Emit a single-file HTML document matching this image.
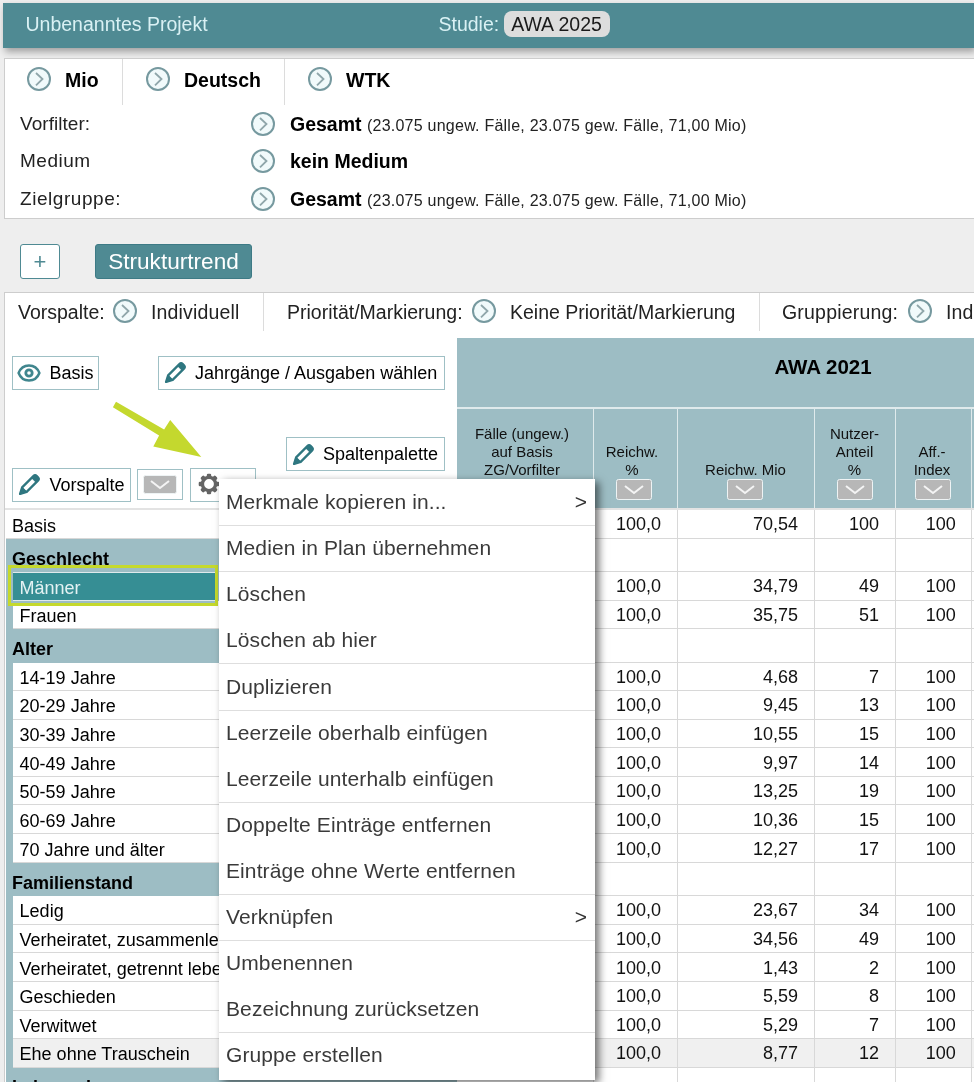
<!DOCTYPE html>
<html lang="de">
<head>
<meta charset="utf-8">
<title>Strukturtrend</title>
<style>
*{box-sizing:border-box;margin:0;padding:0}
html,body{width:974px;height:1082px;overflow:hidden;background:#eeeeee;font-family:"Liberation Sans",sans-serif;color:#111}
#wrap{position:absolute;left:0;top:0;width:974px;height:1082px;overflow:hidden;will-change:transform}
.abs{position:absolute}
#topbar{left:3px;top:2.500px;width:971px;height:45px;background:#4f8a93;box-shadow:2px 4px 7px rgba(0,0,0,.32)}
#topbar .t{position:absolute;top:10.700px;font-size:19.500px;color:#d9f1f4;white-space:nowrap}
#study{height:26px;width:106px;border-radius:8px;background:#dddddd;color:#1a1a1a;font-size:19.500px;line-height:27.500px;text-align:center}
.panel{background:#fff;border:1px solid #cdcdcd}
.ci{position:absolute;width:24px;height:24px}
.lbl{position:absolute;font-size:19px;color:#222;white-space:nowrap}
.bold{position:absolute;font-size:19.5px;font-weight:bold;color:#000;white-space:nowrap}
.bold small{font-weight:normal;font-size:16px;letter-spacing:0.24px;color:#222}
.vsep{position:absolute;width:1px;background:#dcdcdc}
.btn{position:absolute;background:#fff;border:1px solid #9fc0c5;font-size:18px;color:#000;white-space:nowrap;height:34px;line-height:32px}
#hdr{left:457px;top:338.300px;width:517px;height:169.500px;background:#9dbdc4}
.hl{position:absolute;background:#dfeaec}
.ch{position:absolute;font-size:15px;line-height:18px;text-align:center;color:#111;white-space:nowrap}
.row{position:absolute;left:457px;width:517px;border-bottom:1px solid #d8d8d8;background:#fff}
.cell{position:absolute;top:0;height:100%;border-right:1px solid #d8d8d8;font-size:18px;text-align:right;color:#111;padding-right:16px}
.lrow{position:absolute;font-size:18px;color:#000;white-space:nowrap;overflow:hidden}
.grp{left:6px;width:451px;background:#9dbdc4;font-weight:bold;padding-left:6px}
.itm{left:12.600px;width:444.400px;background:#fff;border-bottom:1px solid #d8d8d8;padding-left:7px}
#menu{z-index:5;left:219px;top:479px;width:376px;height:600.500px;background:#fff;box-shadow:4px 3px 8px rgba(0,0,0,.55)}
.mi{position:absolute;left:0;width:376px;height:46px;font-size:21px;letter-spacing:0.1px;color:#3a3a3a;padding-left:7px;line-height:45px;white-space:nowrap}
.ms{position:absolute;left:0;width:376px;height:1px;background:#dedede}
.ar{position:absolute;right:8px;top:0;font-size:21px;color:#333}
</style>
</head>
<body>
<div id="wrap">
<div id="topbar" class="abs">
  <span class="t" style="left:22.500px">Unbenanntes Projekt</span>
  <span class="t" style="left:435.500px">Studie:</span>
  <div id="study" class="abs" style="left:500.500px;top:8.800px">AWA 2025</div>
</div>
<div id="p1" class="abs panel" style="left:3.500px;top:58px;width:976px;height:161px">
  <div class="vsep" style="left:117.500px;top:0;height:46px"></div>
  <div class="vsep" style="left:279.500px;top:0;height:46px"></div>
</div>
<svg class="ci" style="left:27px;top:67px" viewBox="0 0 24 24"><circle cx="12" cy="12" r="11" fill="#f1fafb" stroke="#76999f" stroke-width="2"/><path d="M9 6 L15.5 12 L9 18.3" fill="none" stroke="#8fa6aa" stroke-width="1.800"/></svg><span class="bold" style="left:65px;top:69px">Mio</span>
<svg class="ci" style="left:146px;top:67px" viewBox="0 0 24 24"><circle cx="12" cy="12" r="11" fill="#f1fafb" stroke="#76999f" stroke-width="2"/><path d="M9 6 L15.5 12 L9 18.3" fill="none" stroke="#8fa6aa" stroke-width="1.800"/></svg><span class="bold" style="left:184px;top:69px">Deutsch</span>
<svg class="ci" style="left:308px;top:67px" viewBox="0 0 24 24"><circle cx="12" cy="12" r="11" fill="#f1fafb" stroke="#76999f" stroke-width="2"/><path d="M9 6 L15.5 12 L9 18.3" fill="none" stroke="#8fa6aa" stroke-width="1.800"/></svg><span class="bold" style="left:346px;top:69px">WTK</span>
<span class="lbl" style="left:20px;top:113px;letter-spacing:0.05px">Vorfilter:</span>
<svg class="ci" style="left:251px;top:112px" viewBox="0 0 24 24"><circle cx="12" cy="12" r="11" fill="#f1fafb" stroke="#76999f" stroke-width="2"/><path d="M9 6 L15.5 12 L9 18.3" fill="none" stroke="#8fa6aa" stroke-width="1.800"/></svg><span class="bold" style="left:290px;top:113px">Gesamt <small>(23.075 ungew. Fälle, 23.075 gew. Fälle, 71,00 Mio)</small></span>
<span class="lbl" style="left:20px;top:150px;letter-spacing:0.5px">Medium</span>
<svg class="ci" style="left:251px;top:149px" viewBox="0 0 24 24"><circle cx="12" cy="12" r="11" fill="#f1fafb" stroke="#76999f" stroke-width="2"/><path d="M9 6 L15.5 12 L9 18.3" fill="none" stroke="#8fa6aa" stroke-width="1.800"/></svg><span class="bold" style="left:290px;top:150px">kein Medium</span>
<span class="lbl" style="left:20px;top:188px;letter-spacing:0.55px">Zielgruppe:</span>
<svg class="ci" style="left:251px;top:187px" viewBox="0 0 24 24"><circle cx="12" cy="12" r="11" fill="#f1fafb" stroke="#76999f" stroke-width="2"/><path d="M9 6 L15.5 12 L9 18.3" fill="none" stroke="#8fa6aa" stroke-width="1.800"/></svg><span class="bold" style="left:290px;top:188px">Gesamt <small>(23.075 ungew. Fälle, 23.075 gew. Fälle, 71,00 Mio)</small></span>
<div class="abs" style="left:20px;top:244px;width:40px;height:35px;background:#fff;border:1.5px solid #4f8a93;border-radius:3px;color:#4f8a93;font-size:22px;text-align:center;line-height:33px">+</div>
<div class="abs" style="left:95px;top:244px;width:157px;height:35px;border:1.5px solid #3d7a85;border-radius:3px;background:#4f8a93;color:#fff;font-size:22.600px;text-align:center;line-height:33px">Strukturtrend</div>
<div id="p2" class="abs panel" style="left:3.500px;top:291.700px;width:976px;height:800px">
  <div class="vsep" style="left:258.500px;top:0;height:38px"></div>
  <div class="vsep" style="left:754.500px;top:0;height:38px"></div>
</div>
<span class="lbl" style="left:18px;top:300.800px;font-size:19.5px">Vorspalte:</span><svg class="ci" style="left:113px;top:299px" viewBox="0 0 24 24"><circle cx="12" cy="12" r="11" fill="#f1fafb" stroke="#76999f" stroke-width="2"/><path d="M9 6 L15.5 12 L9 18.3" fill="none" stroke="#8fa6aa" stroke-width="1.800"/></svg><span class="lbl" style="left:151px;top:300.800px;font-size:19.5px;letter-spacing:0.15px">Individuell</span>
<span class="lbl" style="left:287px;top:300.800px;font-size:19.5px">Priorität/Markierung:</span><svg class="ci" style="left:472px;top:299px" viewBox="0 0 24 24"><circle cx="12" cy="12" r="11" fill="#f1fafb" stroke="#76999f" stroke-width="2"/><path d="M9 6 L15.5 12 L9 18.3" fill="none" stroke="#8fa6aa" stroke-width="1.800"/></svg><span class="lbl" style="left:510px;top:300.800px;font-size:19.5px">Keine Priorität/Markierung</span>
<span class="lbl" style="left:782px;top:300.800px;font-size:19.5px;letter-spacing:0.2px">Gruppierung:</span><svg class="ci" style="left:908px;top:299px" viewBox="0 0 24 24"><circle cx="12" cy="12" r="11" fill="#f1fafb" stroke="#76999f" stroke-width="2"/><path d="M9 6 L15.5 12 L9 18.3" fill="none" stroke="#8fa6aa" stroke-width="1.800"/></svg><span class="lbl" style="left:946px;top:300.800px;font-size:19.5px;letter-spacing:0.15px">Individuell</span>
<div class="btn" style="left:12px;top:356px;width:87px;padding-left:36.500px">Basis</div><svg class="abs" style="left:17.3px;top:364.1px;width:24px;height:18px" viewBox="0 0 24 18"><path d="M1.600 9 C5.500 -1 18.500 -1 22.400 9 C18.500 19 5.500 19 1.600 9 Z" fill="#fff" stroke="#40868e" stroke-width="2.500" stroke-linejoin="round"/><circle cx="12" cy="9" r="3.200" fill="none" stroke="#40868e" stroke-width="2.800"/></svg>
<div class="btn" style="left:158px;top:356px;width:287px;padding-left:36px">Jahrgänge / Ausgaben wählen</div><svg class="abs" style="left:162.3px;top:360px;width:26px;height:26px" viewBox="0 0 26 26"><g transform="rotate(45 13 13)"><path d="M9.800 19.500 V3.600 a2.400 2.400 0 0 1 2.400 -2.400 h1.600 a2.400 2.400 0 0 1 2.400 2.400 V19.500 L13 25.600 Z" fill="#fff" stroke="#2f7780" stroke-width="2.300" stroke-linejoin="round"/><path d="M9.800 6 V3.600 a2.400 2.400 0 0 1 2.400 -2.400 h1.600 a2.400 2.400 0 0 1 2.400 2.400 V6 Z" fill="#2f7780" stroke="#2f7780" stroke-width="1"/><path d="M9.800 19.500 H16.200 L13 25.600 Z" fill="#2f7780" stroke="#2f7780" stroke-width="1"/></g></svg>
<div class="btn" style="left:286px;top:437px;width:159px;padding-left:36px">Spaltenpalette</div><svg class="abs" style="left:290.3px;top:441.5px;width:26px;height:26px" viewBox="0 0 26 26"><g transform="rotate(45 13 13)"><path d="M9.800 19.500 V3.600 a2.400 2.400 0 0 1 2.400 -2.400 h1.600 a2.400 2.400 0 0 1 2.400 2.400 V19.500 L13 25.600 Z" fill="#fff" stroke="#2f7780" stroke-width="2.300" stroke-linejoin="round"/><path d="M9.800 6 V3.600 a2.400 2.400 0 0 1 2.400 -2.400 h1.600 a2.400 2.400 0 0 1 2.400 2.400 V6 Z" fill="#2f7780" stroke="#2f7780" stroke-width="1"/><path d="M9.800 19.500 H16.200 L13 25.600 Z" fill="#2f7780" stroke="#2f7780" stroke-width="1"/></g></svg>
<div class="btn" style="left:12px;top:468px;width:119px;padding-left:36.500px">Vorspalte</div><svg class="abs" style="left:16.3px;top:472px;width:26px;height:26px" viewBox="0 0 26 26"><g transform="rotate(45 13 13)"><path d="M9.800 19.500 V3.600 a2.400 2.400 0 0 1 2.400 -2.400 h1.600 a2.400 2.400 0 0 1 2.400 2.400 V19.500 L13 25.600 Z" fill="#fff" stroke="#2f7780" stroke-width="2.300" stroke-linejoin="round"/><path d="M9.800 6 V3.600 a2.400 2.400 0 0 1 2.400 -2.400 h1.600 a2.400 2.400 0 0 1 2.400 2.400 V6 Z" fill="#2f7780" stroke="#2f7780" stroke-width="1"/><path d="M9.800 19.500 H16.200 L13 25.600 Z" fill="#2f7780" stroke="#2f7780" stroke-width="1"/></g></svg>
<div class="btn" style="left:137px;top:469px;width:46px;height:31px"></div><svg class="abs" style="left:143px;top:475px;width:34px;height:19px" viewBox="0 0 34 19"><rect x="0.5" y="0.5" width="33" height="18" rx="2" fill="#b7b7b7" stroke="#eef3f4" stroke-width="1"/><path d="M8.0 6.0 L17.0 13.0 L26.0 6.0" fill="none" stroke="#f4f4f4" stroke-width="2"/></svg>
<div class="btn" style="left:189.500px;top:468px;width:66px"></div><svg class="abs" style="left:197.200px;top:472.400px;width:24px;height:24px" viewBox="-12 -12 24 24"><g fill="#646464"><rect x="-2.200" y="-10.300" width="4.400" height="5" rx="1.300" transform="rotate(0)"/><rect x="-2.200" y="-10.300" width="4.400" height="5" rx="1.300" transform="rotate(45)"/><rect x="-2.200" y="-10.300" width="4.400" height="5" rx="1.300" transform="rotate(90)"/><rect x="-2.200" y="-10.300" width="4.400" height="5" rx="1.300" transform="rotate(135)"/><rect x="-2.200" y="-10.300" width="4.400" height="5" rx="1.300" transform="rotate(180)"/><rect x="-2.200" y="-10.300" width="4.400" height="5" rx="1.300" transform="rotate(225)"/><rect x="-2.200" y="-10.300" width="4.400" height="5" rx="1.300" transform="rotate(270)"/><rect x="-2.200" y="-10.300" width="4.400" height="5" rx="1.300" transform="rotate(315)"/></g><circle r="6.600" fill="none" stroke="#646464" stroke-width="3.400"/></svg>
<svg class="abs" style="left:100px;top:395px;width:120px;height:75px" viewBox="100 395 120 75"><path d="M116 401.700 L164.100 429.400 L170.200 419.900 L201.300 456.900 L153.300 446.400 L159.100 435.600 L112.900 407.200 Z" fill="#c4d82e"/></svg>
<div id="hdr" class="abs">
<div class="hl" style="left:0;top:69px;width:517px;height:1.5px"></div>
<div class="hl" style="left:135.5px;top:70px;height:101px;width:1.5px"></div>
<div class="hl" style="left:219.5px;top:70px;height:101px;width:1.5px"></div>
<div class="hl" style="left:356.5px;top:70px;height:101px;width:1.5px"></div>
<div class="hl" style="left:437.5px;top:70px;height:101px;width:1.5px"></div>
<div class="hl" style="left:513.5px;top:70px;height:101px;width:1.5px"></div>
<div class="abs" style="left:0;top:16.500px;width:732px;text-align:center;font-weight:bold;font-size:20.500px;color:#000">AWA 2021</div>
<div class="ch" style="left:0;top:86.800px;width:130px">Fälle (ungew.)<br>auf Basis<br>ZG/Vorfilter</div>
<div class="ch" style="left:136px;top:104.800px;width:78px">Reichw.<br>%</div>
<div class="ch" style="left:220px;top:122.800px;width:137px">Reichw. Mio</div>
<div class="ch" style="left:357px;top:86.800px;width:81px">Nutzer-<br>Anteil<br>%</div>
<div class="ch" style="left:437px;top:104.800px;width:76px">Aff.-<br>Index</div>
</div>
<svg class="abs" style="left:616px;top:479px;width:36px;height:21px" viewBox="0 0 36 21"><rect x="0.5" y="0.5" width="35" height="20" rx="2" fill="#b7b7b7" stroke="#eef3f4" stroke-width="1"/><path d="M9.0 7.0 L18.0 14.0 L27.0 7.0" fill="none" stroke="#f4f4f4" stroke-width="2"/></svg>
<svg class="abs" style="left:727px;top:479px;width:36px;height:21px" viewBox="0 0 36 21"><rect x="0.5" y="0.5" width="35" height="20" rx="2" fill="#b7b7b7" stroke="#eef3f4" stroke-width="1"/><path d="M9.0 7.0 L18.0 14.0 L27.0 7.0" fill="none" stroke="#f4f4f4" stroke-width="2"/></svg>
<svg class="abs" style="left:837px;top:479px;width:36px;height:21px" viewBox="0 0 36 21"><rect x="0.5" y="0.5" width="35" height="20" rx="2" fill="#b7b7b7" stroke="#eef3f4" stroke-width="1"/><path d="M9.0 7.0 L18.0 14.0 L27.0 7.0" fill="none" stroke="#f4f4f4" stroke-width="2"/></svg>
<svg class="abs" style="left:915px;top:479px;width:36px;height:21px" viewBox="0 0 36 21"><rect x="0.5" y="0.5" width="35" height="20" rx="2" fill="#b7b7b7" stroke="#eef3f4" stroke-width="1"/><path d="M9.0 7.0 L18.0 14.0 L27.0 7.0" fill="none" stroke="#f4f4f4" stroke-width="2"/></svg>
<div class="abs" style="left:5px;top:507.800px;width:969px;height:2.600px;background:#e3e3e3;z-index:1"></div>
<div class="abs" style="left:6px;top:538px;width:451px;height:560px;background:#9dbdc4"></div>
<div class="row" style="top:509px;height:30px;background:#fff;line-height:31px">
<div class="cell" style="left:0px;width:137px"></div>
<div class="cell" style="left:136px;width:85px">100,0</div>
<div class="cell" style="left:220px;width:138px">70,54</div>
<div class="cell" style="left:357px;width:82px">100</div>
<div class="cell" style="left:438px;width:77px;padding-right:15.300px">100</div>
</div>
<div class="lrow itm" style="left:6px;width:451px;padding-left:6px;top:509px;height:30px;line-height:34px">Basis</div>
<div class="row" style="top:539px;height:33px;background:#fff;line-height:34px">
<div class="cell" style="left:0px;width:137px"></div>
<div class="cell" style="left:136px;width:85px"></div>
<div class="cell" style="left:220px;width:138px"></div>
<div class="cell" style="left:357px;width:82px"></div>
<div class="cell" style="left:438px;width:77px;padding-right:15.300px"></div>
</div>
<div class="lrow grp" style="top:539px;height:33px;line-height:40px">Geschlecht</div>
<div class="row" style="top:572px;height:28.5px;background:#fff;line-height:29.5px">
<div class="cell" style="left:0px;width:137px"></div>
<div class="cell" style="left:136px;width:85px">100,0</div>
<div class="cell" style="left:220px;width:138px">34,79</div>
<div class="cell" style="left:357px;width:82px">49</div>
<div class="cell" style="left:438px;width:77px;padding-right:15.300px">100</div>
</div>
<div class="row" style="top:600.5px;height:28.5px;background:#fff;line-height:29.5px">
<div class="cell" style="left:0px;width:137px"></div>
<div class="cell" style="left:136px;width:85px">100,0</div>
<div class="cell" style="left:220px;width:138px">35,75</div>
<div class="cell" style="left:357px;width:82px">51</div>
<div class="cell" style="left:438px;width:77px;padding-right:15.300px">100</div>
</div>
<div class="lrow itm" style="top:600.5px;height:28.5px;line-height:31.5px;background:#fff">Frauen</div>
<div class="row" style="top:629px;height:33.5px;background:#fff;line-height:34.5px">
<div class="cell" style="left:0px;width:137px"></div>
<div class="cell" style="left:136px;width:85px"></div>
<div class="cell" style="left:220px;width:138px"></div>
<div class="cell" style="left:357px;width:82px"></div>
<div class="cell" style="left:438px;width:77px;padding-right:15.300px"></div>
</div>
<div class="lrow grp" style="top:629px;height:33.5px;line-height:40.5px">Alter</div>
<div class="row" style="top:662.5px;height:28.5px;background:#fff;line-height:29.5px">
<div class="cell" style="left:0px;width:137px"></div>
<div class="cell" style="left:136px;width:85px">100,0</div>
<div class="cell" style="left:220px;width:138px">4,68</div>
<div class="cell" style="left:357px;width:82px">7</div>
<div class="cell" style="left:438px;width:77px;padding-right:15.300px">100</div>
</div>
<div class="lrow itm" style="top:662.5px;height:28.5px;line-height:31.5px;background:#fff">14-19 Jahre</div>
<div class="row" style="top:691px;height:28.5px;background:#fff;line-height:29.5px">
<div class="cell" style="left:0px;width:137px"></div>
<div class="cell" style="left:136px;width:85px">100,0</div>
<div class="cell" style="left:220px;width:138px">9,45</div>
<div class="cell" style="left:357px;width:82px">13</div>
<div class="cell" style="left:438px;width:77px;padding-right:15.300px">100</div>
</div>
<div class="lrow itm" style="top:691px;height:28.5px;line-height:31.5px;background:#fff">20-29 Jahre</div>
<div class="row" style="top:719.5px;height:28.5px;background:#fff;line-height:29.5px">
<div class="cell" style="left:0px;width:137px"></div>
<div class="cell" style="left:136px;width:85px">100,0</div>
<div class="cell" style="left:220px;width:138px">10,55</div>
<div class="cell" style="left:357px;width:82px">15</div>
<div class="cell" style="left:438px;width:77px;padding-right:15.300px">100</div>
</div>
<div class="lrow itm" style="top:719.5px;height:28.5px;line-height:31.5px;background:#fff">30-39 Jahre</div>
<div class="row" style="top:748px;height:29px;background:#fff;line-height:30px">
<div class="cell" style="left:0px;width:137px"></div>
<div class="cell" style="left:136px;width:85px">100,0</div>
<div class="cell" style="left:220px;width:138px">9,97</div>
<div class="cell" style="left:357px;width:82px">14</div>
<div class="cell" style="left:438px;width:77px;padding-right:15.300px">100</div>
</div>
<div class="lrow itm" style="top:748px;height:29px;line-height:32px;background:#fff">40-49 Jahre</div>
<div class="row" style="top:777px;height:28px;background:#fff;line-height:29px">
<div class="cell" style="left:0px;width:137px"></div>
<div class="cell" style="left:136px;width:85px">100,0</div>
<div class="cell" style="left:220px;width:138px">13,25</div>
<div class="cell" style="left:357px;width:82px">19</div>
<div class="cell" style="left:438px;width:77px;padding-right:15.300px">100</div>
</div>
<div class="lrow itm" style="top:777px;height:28px;line-height:31px;background:#fff">50-59 Jahre</div>
<div class="row" style="top:805px;height:29px;background:#fff;line-height:30px">
<div class="cell" style="left:0px;width:137px"></div>
<div class="cell" style="left:136px;width:85px">100,0</div>
<div class="cell" style="left:220px;width:138px">10,36</div>
<div class="cell" style="left:357px;width:82px">15</div>
<div class="cell" style="left:438px;width:77px;padding-right:15.300px">100</div>
</div>
<div class="lrow itm" style="top:805px;height:29px;line-height:32px;background:#fff">60-69 Jahre</div>
<div class="row" style="top:834px;height:29px;background:#fff;line-height:30px">
<div class="cell" style="left:0px;width:137px"></div>
<div class="cell" style="left:136px;width:85px">100,0</div>
<div class="cell" style="left:220px;width:138px">12,27</div>
<div class="cell" style="left:357px;width:82px">17</div>
<div class="cell" style="left:438px;width:77px;padding-right:15.300px">100</div>
</div>
<div class="lrow itm" style="top:834px;height:29px;line-height:32px;background:#fff">70 Jahre und älter</div>
<div class="row" style="top:863px;height:33px;background:#fff;line-height:34px">
<div class="cell" style="left:0px;width:137px"></div>
<div class="cell" style="left:136px;width:85px"></div>
<div class="cell" style="left:220px;width:138px"></div>
<div class="cell" style="left:357px;width:82px"></div>
<div class="cell" style="left:438px;width:77px;padding-right:15.300px"></div>
</div>
<div class="lrow grp" style="top:863px;height:33px;line-height:40px">Familienstand</div>
<div class="row" style="top:896px;height:28.5px;background:#fff;line-height:29.5px">
<div class="cell" style="left:0px;width:137px"></div>
<div class="cell" style="left:136px;width:85px">100,0</div>
<div class="cell" style="left:220px;width:138px">23,67</div>
<div class="cell" style="left:357px;width:82px">34</div>
<div class="cell" style="left:438px;width:77px;padding-right:15.300px">100</div>
</div>
<div class="lrow itm" style="top:896px;height:28.5px;line-height:31.5px;background:#fff">Ledig</div>
<div class="row" style="top:924.5px;height:28.5px;background:#fff;line-height:29.5px">
<div class="cell" style="left:0px;width:137px"></div>
<div class="cell" style="left:136px;width:85px">100,0</div>
<div class="cell" style="left:220px;width:138px">34,56</div>
<div class="cell" style="left:357px;width:82px">49</div>
<div class="cell" style="left:438px;width:77px;padding-right:15.300px">100</div>
</div>
<div class="lrow itm" style="top:924.5px;height:28.5px;line-height:31.5px;background:#fff">Verheiratet, zusammenlebend</div>
<div class="row" style="top:953px;height:29px;background:#fff;line-height:30px">
<div class="cell" style="left:0px;width:137px"></div>
<div class="cell" style="left:136px;width:85px">100,0</div>
<div class="cell" style="left:220px;width:138px">1,43</div>
<div class="cell" style="left:357px;width:82px">2</div>
<div class="cell" style="left:438px;width:77px;padding-right:15.300px">100</div>
</div>
<div class="lrow itm" style="top:953px;height:29px;line-height:32px;background:#fff">Verheiratet, getrennt lebend</div>
<div class="row" style="top:982px;height:28.5px;background:#fff;line-height:29.5px">
<div class="cell" style="left:0px;width:137px"></div>
<div class="cell" style="left:136px;width:85px">100,0</div>
<div class="cell" style="left:220px;width:138px">5,59</div>
<div class="cell" style="left:357px;width:82px">8</div>
<div class="cell" style="left:438px;width:77px;padding-right:15.300px">100</div>
</div>
<div class="lrow itm" style="top:982px;height:28.5px;line-height:31.5px;background:#fff">Geschieden</div>
<div class="row" style="top:1010.5px;height:28.5px;background:#fff;line-height:29.5px">
<div class="cell" style="left:0px;width:137px"></div>
<div class="cell" style="left:136px;width:85px">100,0</div>
<div class="cell" style="left:220px;width:138px">5,29</div>
<div class="cell" style="left:357px;width:82px">7</div>
<div class="cell" style="left:438px;width:77px;padding-right:15.300px">100</div>
</div>
<div class="lrow itm" style="top:1010.5px;height:28.5px;line-height:31.5px;background:#fff">Verwitwet</div>
<div class="row" style="top:1039px;height:28.5px;background:#f0f0f0;line-height:29.5px">
<div class="cell" style="left:0px;width:137px"></div>
<div class="cell" style="left:136px;width:85px">100,0</div>
<div class="cell" style="left:220px;width:138px">8,77</div>
<div class="cell" style="left:357px;width:82px">12</div>
<div class="cell" style="left:438px;width:77px;padding-right:15.300px">100</div>
</div>
<div class="lrow itm" style="top:1039px;height:28.5px;line-height:31.5px;background:#f0f0f0">Ehe ohne Trauschein</div>
<div class="row" style="top:1067.5px;height:32.5px;background:#fff;line-height:33.5px">
<div class="cell" style="left:0px;width:137px"></div>
<div class="cell" style="left:136px;width:85px"></div>
<div class="cell" style="left:220px;width:138px"></div>
<div class="cell" style="left:357px;width:82px"></div>
<div class="cell" style="left:438px;width:77px;padding-right:15.300px"></div>
</div>
<div class="lrow grp" style="top:1067.5px;height:32.5px;line-height:39.5px">Lebensphasen</div>
<div class="abs" style="left:8px;top:564.500px;width:210px;height:41px;border:3.200px solid #c5d92d;background:#9dbdc4"></div>
<div class="lrow" style="left:13px;top:571.500px;width:201.500px;height:29px;line-height:30px;background:#368e94;color:#e4f2f3;padding-left:6.500px;border-top:1px solid #dfeaec;border-bottom:1px solid #dfeaec">Männer</div>
<div id="menu" class="abs">
<div class="mi" style="top:0.0px">Merkmale kopieren in...<span class="ar">&gt;</span></div>
<div class="ms" style="top:46.0px"></div>
<div class="mi" style="top:46.1px">Medien in Plan übernehmen</div>
<div class="ms" style="top:92.1px"></div>
<div class="mi" style="top:92.2px">Löschen</div>
<div class="mi" style="top:138.4px">Löschen ab hier</div>
<div class="ms" style="top:184.4px"></div>
<div class="mi" style="top:184.5px">Duplizieren</div>
<div class="ms" style="top:230.5px"></div>
<div class="mi" style="top:230.6px">Leerzeile oberhalb einfügen</div>
<div class="mi" style="top:276.7px">Leerzeile unterhalb einfügen</div>
<div class="ms" style="top:322.7px"></div>
<div class="mi" style="top:322.8px">Doppelte Einträge entfernen</div>
<div class="mi" style="top:369.0px">Einträge ohne Werte entfernen</div>
<div class="ms" style="top:415.0px"></div>
<div class="mi" style="top:415.1px">Verknüpfen<span class="ar">&gt;</span></div>
<div class="ms" style="top:461.1px"></div>
<div class="mi" style="top:461.2px">Umbenennen</div>
<div class="mi" style="top:507.3px">Bezeichnung zurücksetzen</div>
<div class="ms" style="top:553.3px"></div>
<div class="mi" style="top:553.4px">Gruppe erstellen</div>
</div>
</div>
</body>
</html>
